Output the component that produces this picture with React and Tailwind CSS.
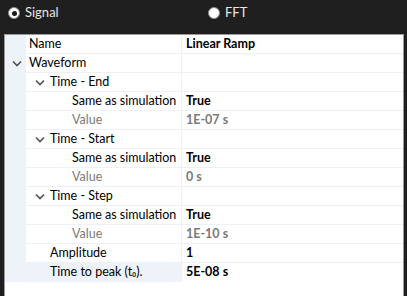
import React from "react";

const rows = [
  { label: "Name", value: "Linear Ramp", indent: 0, kind: "bold" },
  { label: "Waveform", indent: 0, chevron: true },
  { label: "Time - End", indent: 1, chevron: true },
  { label: "Same as simulation", indent: 2, value: "True", kind: "bold" },
  { label: "Value", indent: 2, value: "1E-07 s", kind: "muted" },
  { label: "Time - Start", indent: 1, chevron: true },
  { label: "Same as simulation", indent: 2, value: "True", kind: "bold" },
  { label: "Value", indent: 2, value: "0 s", kind: "muted" },
  { label: "Time - Step", indent: 1, chevron: true },
  { label: "Same as simulation", indent: 2, value: "True", kind: "bold" },
  { label: "Value", indent: 2, value: "1E-10 s", kind: "muted" },
  { label: "Amplitude", indent: 1, value: "1", kind: "bold" },
  { label: "Time to peak (t₀).", indent: 1, value: "5E-08 s", kind: "bold", selected: true },
];

const Chevron = () => (
  <svg width="10" height="7" viewBox="0 0 10 7" className="shrink-0">
    <path d="M1 1.5 L5 5.5 L9 1.5" fill="none" stroke="#505050" strokeWidth="1.6" />
  </svg>
);

const Radio = ({ checked }) => (
  <span className="w-[12px] h-[12px] rounded-full bg-white border border-[#8a8a8a] flex items-center justify-center shrink-0">
    {checked && <span className="w-[5px] h-[5px] rounded-full bg-[#1a1a1a]" />}
  </span>
);

const Row = ({ row }) => {
  const pad = { 0: "pl-[24px]", 1: "pl-[45px]", 2: "pl-[67px]" }[row.indent];
  const chevPos = { 0: "left-[7px]", 1: "left-[30px]", 2: "left-[52px]" }[row.indent];
  const muted = row.kind === "muted";
  return (
    <div className="flex h-[19px]">
      <div
        className={`relative w-[176px] shrink-0 flex items-center whitespace-nowrap ${pad} ${
          muted ? "text-[#7a7a7a]" : "text-black"
        } bg-[#eef3fa]`}
      >
        {!row.selected && (
          <div className="absolute left-[21px] right-0 top-0 bottom-0 bg-white border-b border-[#eef0f7]" />
        )}
        {row.chevron && (
          <span className={`absolute ${chevPos} top-[6px]`}>
            <Chevron />
          </span>
        )}
        <span className="relative">{row.label}</span>
      </div>
      <div
        className={`flex-1 flex items-center pl-[4px] bg-white border-l border-[#eef0f7] font-bold whitespace-nowrap ${
          muted ? "text-[#7a7a7a]" : "text-black"
        } ${row.selected ? "" : "border-b"}`}
      >
        {row.value}
      </div>
    </div>
  );
};

export default function App() {
  return (
    <div
      className="w-[407px] h-[296px] bg-[#1f1f1f] overflow-hidden text-[12.5px]"
      style={{ fontFamily: 'Lato, "Noto Sans", sans-serif' }}
    >
      <div className="h-[34px] flex pt-[7px] pl-[8px] text-[13px] text-[#e6e6e6]">
        <label className="flex items-center gap-[5px] w-[200px] h-[12px]">
          <Radio checked />
          <span>Signal</span>
        </label>
        <label className="flex items-center gap-[5px] h-[12px]">
          <Radio />
          <span>FFT</span>
        </label>
      </div>
      <div className="ml-[4px] w-[400px] h-[262px] bg-white border border-[#9a9a9a] border-b-0">
        {rows.map((r, i) => (
          <Row key={i} row={r} />
        ))}
      </div>
    </div>
  );
}
